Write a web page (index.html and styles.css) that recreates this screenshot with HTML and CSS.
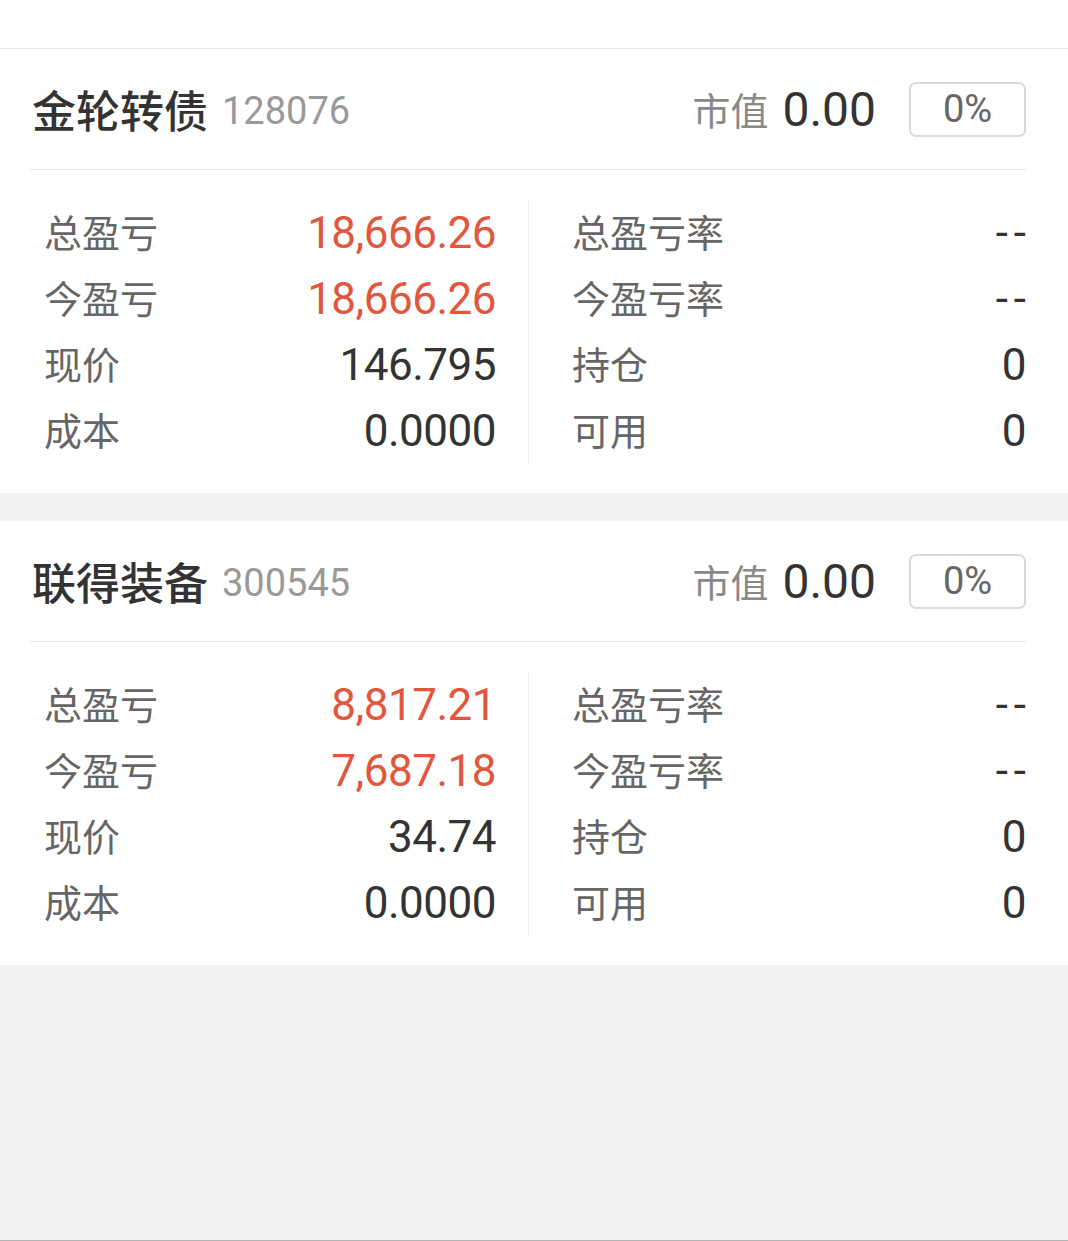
FILE: index.html
```html
<!DOCTYPE html>
<html lang="zh-CN">
<head>
    <meta charset="UTF-8">
    <meta name="viewport" content="width=device-width, initial-scale=1.0">
    <title>持仓</title>
    <link rel="stylesheet" href="styles.css">
</head>
<body>
    <div class="page">
        <div class="top-bar"></div>

        <div class="position-card">
            <div class="card-header">
                <div class="stock-name">金轮转债<span class="stock-code">128076</span></div>
                <div class="market-value">
                    <span class="mv-label">市值</span>
                    <span class="mv-num">0.00</span>
                    <span class="ratio-badge">0%</span>
                </div>
            </div>
            <div class="stats">
                <div class="stats-col left">
                    <div class="stat-row"><span class="stat-label">总盈亏</span><span class="stat-value red">18,666.26</span></div>
                    <div class="stat-row"><span class="stat-label">今盈亏</span><span class="stat-value red">18,666.26</span></div>
                    <div class="stat-row"><span class="stat-label">现价</span><span class="stat-value">146.795</span></div>
                    <div class="stat-row"><span class="stat-label">成本</span><span class="stat-value">0.0000</span></div>
                </div>
                <div class="stats-col right">
                    <div class="stat-row"><span class="stat-label">总盈亏率</span><span class="stat-value dash">--</span></div>
                    <div class="stat-row"><span class="stat-label">今盈亏率</span><span class="stat-value dash">--</span></div>
                    <div class="stat-row"><span class="stat-label">持仓</span><span class="stat-value">0</span></div>
                    <div class="stat-row"><span class="stat-label">可用</span><span class="stat-value">0</span></div>
                </div>
            </div>
        </div>

        <div class="position-card">
            <div class="card-header">
                <div class="stock-name">联得装备<span class="stock-code">300545</span></div>
                <div class="market-value">
                    <span class="mv-label">市值</span>
                    <span class="mv-num">0.00</span>
                    <span class="ratio-badge">0%</span>
                </div>
            </div>
            <div class="stats">
                <div class="stats-col left">
                    <div class="stat-row"><span class="stat-label">总盈亏</span><span class="stat-value red">8,817.21</span></div>
                    <div class="stat-row"><span class="stat-label">今盈亏</span><span class="stat-value red">7,687.18</span></div>
                    <div class="stat-row"><span class="stat-label">现价</span><span class="stat-value">34.74</span></div>
                    <div class="stat-row"><span class="stat-label">成本</span><span class="stat-value">0.0000</span></div>
                </div>
                <div class="stats-col right">
                    <div class="stat-row"><span class="stat-label">总盈亏率</span><span class="stat-value dash">--</span></div>
                    <div class="stat-row"><span class="stat-label">今盈亏率</span><span class="stat-value dash">--</span></div>
                    <div class="stat-row"><span class="stat-label">持仓</span><span class="stat-value">0</span></div>
                    <div class="stat-row"><span class="stat-label">可用</span><span class="stat-value">0</span></div>
                </div>
            </div>
        </div>
    </div>
</body>
</html>
```

FILE: styles.css
```css
body {
    margin: 0;
    font-family: Roboto, "Noto Sans CJK SC", sans-serif;
    background: #f1f1f3;
    color: #333;
}
.page {
    min-height: 1241px;
    box-sizing: border-box;
    border-bottom: 1px solid #b4b4b4;
}
.top-bar {
    height: 48px;
    background: #fff;
    border-bottom: 1px solid #e6e6e6;
}
.position-card {
    background: #fff;
    margin-bottom: 28px;
}
.card-header {
    height: 120px;
    margin: 0 42px 0 30px;
    border-bottom: 1px solid #e6e6e6;
    display: flex;
    align-items: center;
    justify-content: space-between;
}
.stock-name {
    font-size: 44px;
    font-weight: 500;
    color: #333;
    padding-left: 2px;
    display: flex;
    align-items: center;
}
.stock-code {
    font-size: 38px;
    font-weight: 400;
    color: #999;
    margin-left: 14px;
    margin-top: 4px;
}
.market-value {
    display: flex;
    align-items: center;
}
.mv-label {
    font-size: 38px;
    color: #888;
    margin-bottom: 2px;
}
.mv-num {
    font-size: 48px;
    color: #333;
    margin-left: 14px;
}
.ratio-badge {
    margin-left: 33px;
    width: 113px;
    height: 51px;
    border: 2px solid #dadada;
    border-radius: 7px;
    font-size: 38px;
    color: #666;
    display: flex;
    align-items: center;
    justify-content: center;
}
.stats {
    display: flex;
    margin: 0 42px 0 44px;
    padding: 30px 0 29px;
}
.stats-col.left {
    flex: 0 0 452px;
    padding-right: 32px;
    border-right: 1px solid #ececec;
}
.stats-col.right {
    flex: 1;
    padding-left: 43px;
}
.stat-row {
    height: 66px;
    display: flex;
    align-items: center;
    justify-content: space-between;
}
.stat-label {
    font-size: 38px;
    color: #666;
    margin-bottom: 6px;
}
.stat-value {
    font-size: 44px;
    letter-spacing: -0.5px;
    color: #333;
}
.stat-value.red {
    color: #e0573d;
}
.stat-value.dash {
    letter-spacing: 6px;
    margin-right: -6px;
}
```
